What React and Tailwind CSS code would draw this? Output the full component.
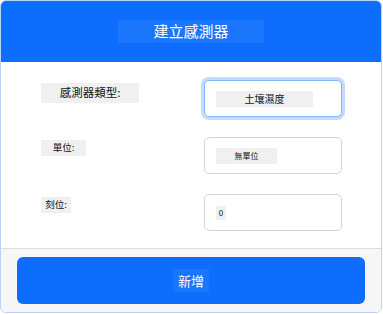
import React from "react";

const cjk = { fontFamily: '"Noto Sans CJK TC", "Noto Sans", sans-serif' };

function Field({ label, labelClass, value, valueClass, focused }) {
  return (
    <div className="flex h-[37px] items-start">
      <div className="flex w-[203px] shrink-0 items-start pl-[40px] pt-[3px]">
        <span className={`block bg-[#f0f0f0] text-[#111] leading-none ${labelClass}`}>{label}</span>
      </div>
      <div
        className={`flex h-[37px] w-[138px] items-center rounded-[5px] border bg-white pl-[11px] ${
          focused ? "border-[#86b7fe] ring-[3px] ring-[#c2dbfe]" : "border-[#d4d4d4]"
        }`}
      >
        <span className={`block bg-[#f0f0f0] leading-none text-[#111] ${valueClass}`}>{value}</span>
      </div>
    </div>
  );
}

export default function App() {
  return (
    <div className="h-[314px] w-[383px] bg-white" style={cjk}>
      <div className="flex h-[313px] w-[382px] flex-col overflow-hidden rounded-[6px] border border-[#b9d3fb]">
        <div className="flex h-[61px] shrink-0 items-center justify-center bg-[#0d6efd]">
          <span className="flex h-[23px] w-[146px] items-center justify-center bg-[#1a76fd] text-[15px] text-white">
            建立感測器
          </span>
        </div>
        <div className="flex flex-1 flex-col gap-[20px] bg-white pt-[18px]">
          <Field
            label="感測器類型:"
            labelClass="w-[98px] py-[4px] text-center text-[11.5px]"
            value="土壤濕度"
            valueClass="w-[97px] py-[3px] text-center text-[10px]"
            focused
          />
          <Field
            label="單位:"
            labelClass="w-[45px] py-[3px] text-center text-[9.5px]"
            value="無單位"
            valueClass="w-[61px] py-[4px] text-center text-[8px]"
          />
          <Field
            label="刻位:"
            labelClass="w-[30px] py-[3px] text-center text-[9.5px]"
            value="0"
            valueClass="w-[10px] py-[3px] text-center text-[8px]"
          />
        </div>
        <div className="flex h-[64px] shrink-0 items-center border-t border-[#dcdcdc] bg-[#f7f7f7] px-[16px]">
          <button className="flex h-[47px] w-full items-center justify-center rounded-[6px] bg-[#0d6efd]">
            <span className="bg-[#1a76fd] px-[5px] py-[2px] text-[13px] text-white">新增</span>
          </button>
        </div>
      </div>
    </div>
  );
}
